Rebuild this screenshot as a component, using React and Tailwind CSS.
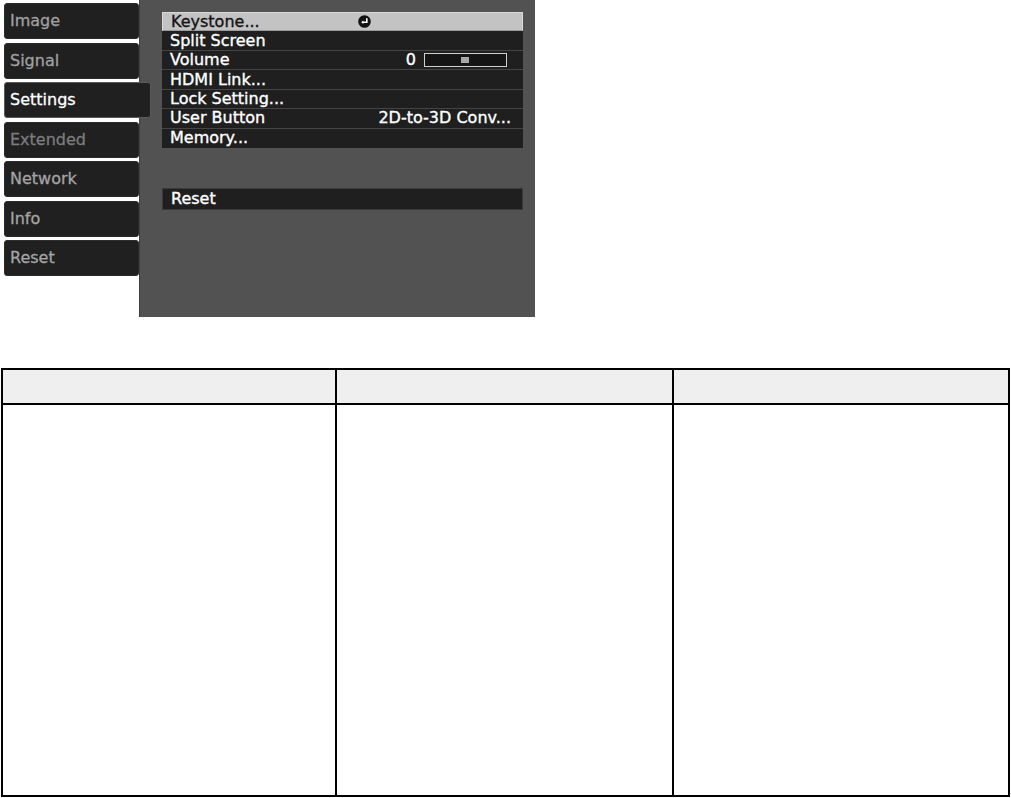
import React from "react";

const tabs = [
  { label: "Image", color: "text-[#a0a0a0]" },
  { label: "Signal", color: "text-[#a0a0a0]" },
  { label: "Settings", color: "text-white", active: true },
  { label: "Extended", color: "text-[#7c7c7c]" },
  { label: "Network", color: "text-[#a4a4a4]" },
  { label: "Info", color: "text-[#a4a4a4]" },
  { label: "Reset", color: "text-[#a4a4a4]" },
];

function EnterIcon() {
  return (
    <svg width="13" height="13" viewBox="0 0 13 13" className="block">
      <circle cx="6.5" cy="6.5" r="6.3" fill="#111" />
      <path d="M8.8 3.2 V7.2 H4.6" stroke="#fff" strokeWidth="1.6" fill="none" />
      <path d="M3.2 7.2 L5.3 5.4 V9 Z" fill="#fff" />
    </svg>
  );
}

function Row({ children, className = "" }) {
  return (
    <div
      className={
        "h-[19.45px] flex items-center pl-[8px] border-b border-[#454545] text-[16px] leading-none [-webkit-text-stroke:0.35px] " +
        className
      }
    >
      {children}
    </div>
  );
}

export default function App() {
  return (
    <div
      className="w-[1011px] h-[798px] bg-white relative"
      style={{ fontFamily: '"DejaVu Sans", "Liberation Sans", sans-serif' }}
    >
      <div className="flex">
        <div className="w-[139px] shrink-0 pl-[4px] pt-[3px] flex flex-col gap-[3.5px] relative z-10">
          {tabs.map((t) => (
            <div
              key={t.label}
              className={
                "h-[36px] flex items-center pl-[5px] rounded-[3px] bg-[#202020] text-[16px] leading-none [-webkit-text-stroke:0.3px] shrink-0 " +
                t.color +
                (t.active
                  ? " w-[147px] border border-[#5a5a5a]"
                  : " w-[135px] border border-[#2c2c2c]")
              }
            >
              {t.label}
            </div>
          ))}
        </div>
        <div className="w-[396px] shrink-0 h-[317px] bg-[#525252] border-l border-[#3e3e3e] pl-[22px] pr-[12px] pt-[12px]">
          <div className="w-[361px] text-white">
            <Row className="bg-[#c3c3c3] text-[#151515] border border-[#dadada] border-b-[#9a9a9a]">
              <span className="w-[187px]">Keystone...</span>
              <EnterIcon />
            </Row>
            <div className="bg-[#1f1f1f]">
              <Row>Split Screen</Row>
              <Row className="justify-between">
                <span>Volume</span>
                <div className="flex items-center mr-[16px]">
                  <span className="mr-[8px]">0</span>
                  <div className="w-[83px] h-[14px] border border-[#cfcfcf] bg-[#151515] flex items-center pl-[36px]">
                    <div className="w-[8px] h-[6px] bg-[#a8a8a8]" />
                  </div>
                </div>
              </Row>
              <Row>HDMI Link...</Row>
              <Row>Lock Setting...</Row>
              <Row className="justify-between">
                <span>User Button</span>
                <span className="mr-[12px]">2D-to-3D Conv...</span>
              </Row>
              <Row className="border-b-0">Memory...</Row>
            </div>
            <div className="mt-[40px] bg-[#1f1f1f] border border-[#3a3a3a]">
              <Row className="border-b-0">Reset</Row>
            </div>
          </div>
        </div>
      </div>

      <div className="mt-[51px] ml-[1px] w-[1009px] h-[429px] border-2 border-black flex flex-col">
        <div className="grid grid-cols-[334px_337px_1fr] h-[35px] bg-[#efefef] border-b-2 border-black">
          <div className="border-r-2 border-black" />
          <div className="border-r-2 border-black" />
          <div />
        </div>
        <div className="grid grid-cols-[334px_337px_1fr] flex-1">
          <div className="border-r-2 border-black" />
          <div className="border-r-2 border-black" />
          <div />
        </div>
      </div>
    </div>
  );
}
